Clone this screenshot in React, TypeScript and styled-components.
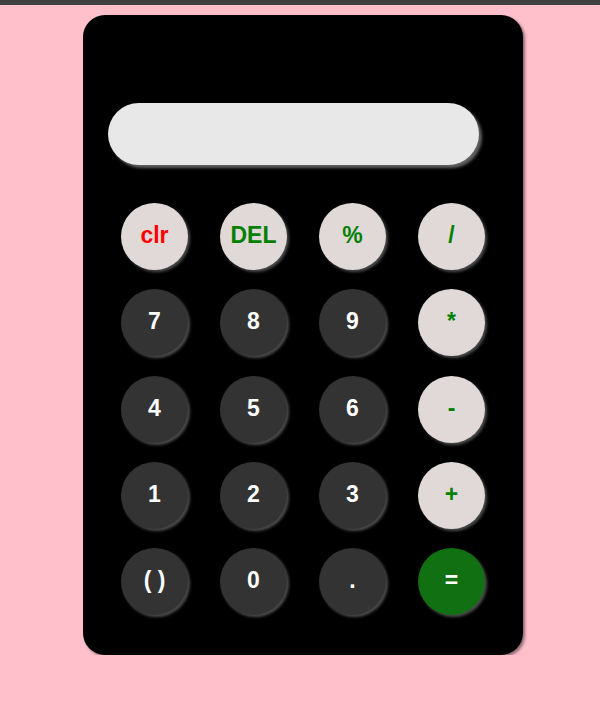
import React from 'react';
import styled, { createGlobalStyle } from 'styled-components';

const GlobalStyle = createGlobalStyle`
  body {
    margin: 0;
    background: pink;
    font-family: "Liberation Sans", Arial, sans-serif;
  }
`;

const TopBar = styled.div`
  height: 5px;
  background: #3f3f3f;
`;

const Calculator = styled.div`
  width: 440px;
  height: 640px;
  box-sizing: border-box;
  margin: 10px 0 0 83px;
  padding: 88px 0 0 25px;
  background: #000;
  border-radius: 22px;
  box-shadow: 2px 2px 3px rgba(0, 0, 0, 0.45);
`;

const Display = styled.div`
  width: 371px;
  height: 62px;
  background: #e8e8e8;
  border-radius: 31px;
  box-shadow: 3px 3px 3px rgba(120, 120, 120, 0.8);
`;

const Keys = styled.div`
  display: grid;
  grid-template-columns: repeat(4, 67px);
  grid-auto-rows: 67px;
  column-gap: 32px;
  row-gap: 19.25px;
  margin: 38px 0 0 13px;
`;

type Kind = 'light' | 'dark' | 'equal';

const Key = styled.button<{ $kind: Kind; $red?: boolean }>`
  width: 67px;
  height: 67px;
  border: none;
  border-radius: 50%;
  padding: 0 0 2px;
  font-family: "Liberation Sans", Arial, sans-serif;
  font-size: 23px;
  font-weight: bold;
  cursor: pointer;
  background: ${p => (p.$kind === 'light' ? '#e0d9d7' : p.$kind === 'dark' ? '#333333' : '#117011')};
  color: ${p => (p.$kind === 'light' ? (p.$red ? '#ff0000' : '#008000') : '#ffffff')};
  box-shadow: 2px 2px 3px rgba(110, 110, 110, 0.7);
`;

const keys: { label: string; kind: Kind; red?: boolean }[] = [
  { label: 'clr', kind: 'light', red: true },
  { label: 'DEL', kind: 'light' },
  { label: '%', kind: 'light' },
  { label: '/', kind: 'light' },
  { label: '7', kind: 'dark' },
  { label: '8', kind: 'dark' },
  { label: '9', kind: 'dark' },
  { label: '*', kind: 'light' },
  { label: '4', kind: 'dark' },
  { label: '5', kind: 'dark' },
  { label: '6', kind: 'dark' },
  { label: '-', kind: 'light' },
  { label: '1', kind: 'dark' },
  { label: '2', kind: 'dark' },
  { label: '3', kind: 'dark' },
  { label: '+', kind: 'light' },
  { label: '( )', kind: 'dark' },
  { label: '0', kind: 'dark' },
  { label: '.', kind: 'dark' },
  { label: '=', kind: 'equal' },
];

const App: React.FC = () => (
  <>
    <GlobalStyle />
    <TopBar />
    <Calculator>
      <Display />
      <Keys>
        {keys.map(k => (
          <Key key={k.label} $kind={k.kind} $red={k.red}>
            {k.label}
          </Key>
        ))}
      </Keys>
    </Calculator>
  </>
);

export default App;
